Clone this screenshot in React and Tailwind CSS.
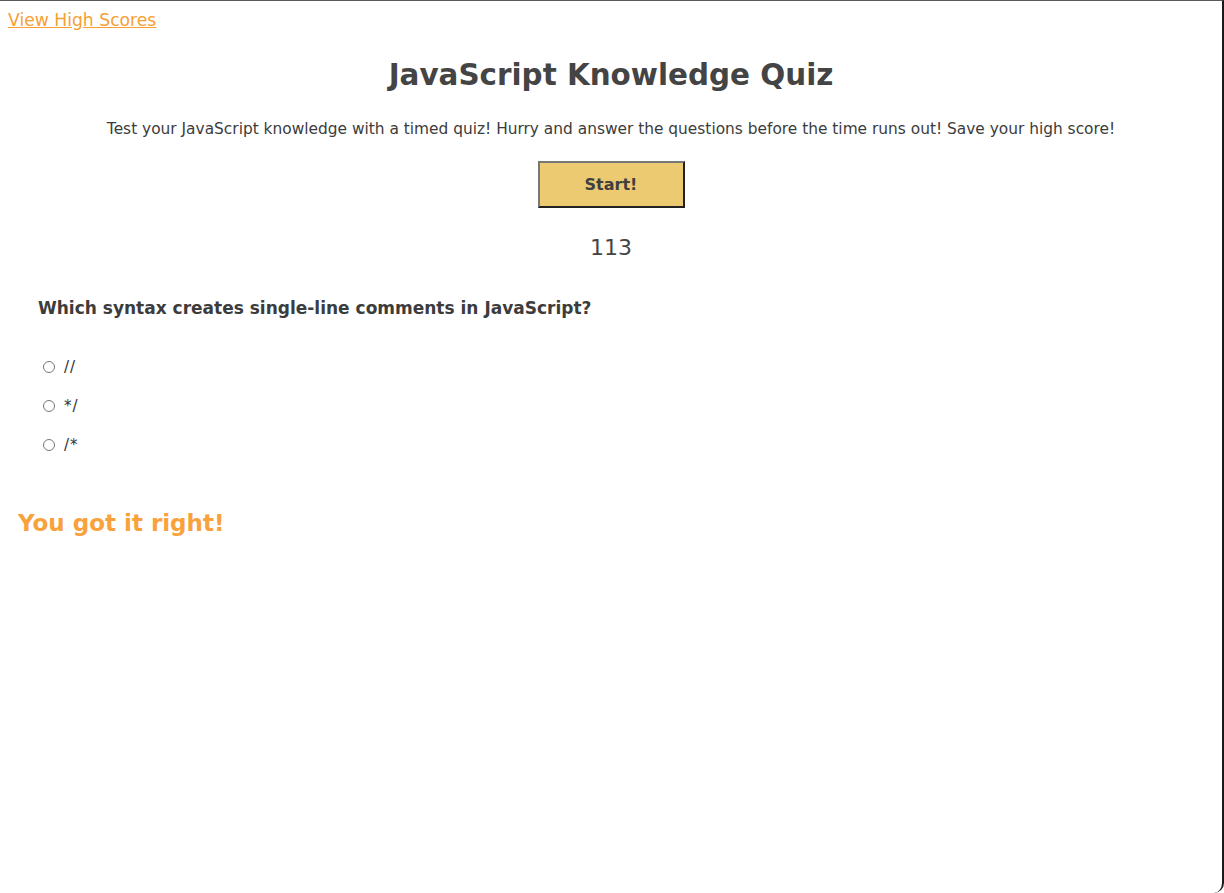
const App = () => {
  const options = ['//', '*/', '/*'];

  return (
    <div
      className="h-[893px] w-full bg-white border-t border-t-[#5a5a5a] border-r-2 border-r-[#1a1a1a] rounded-b-[10px] text-[#444444] overflow-hidden"
      style={{ fontFamily: '"DejaVu Sans", Verdana, sans-serif' }}
    >
      <div className="px-2 pt-[8px]">
        <a href="#" className="text-[17.2px] leading-[20px] text-[#f7a033] underline">
          View High Scores
        </a>
      </div>

      {/* Header */}
      <div className="flex flex-col items-center">
        <h1 className="mt-[24px] text-[29.4px] leading-[36px] font-bold text-[#444444]">
          JavaScript Knowledge Quiz
        </h1>
        <p className="mt-[27px] text-[15.4px] leading-[18px] text-[#3c3c3c]">
          Test your JavaScript knowledge with a timed quiz! Hurry and answer the questions before the time runs out! Save your high score!
        </p>
        <button className="mt-[23px] w-[147px] h-[47px] bg-[#ecca72] border-2 border-t-[#777777] border-l-[#777777] border-r-[#222222] border-b-[#222222] text-[16px] font-bold text-[#3f3f3f]">
          Start!
        </button>
        <div className="mt-[26px] text-[22px] leading-[28px] text-[#444444]">113</div>
      </div>

      {/* Question */}
      <div className="px-[38px] mt-[36px]">
        <h3 className="text-[17px] leading-[20px] font-bold text-[#3c3c3c]">
          Which syntax creates single-line comments in JavaScript?
        </h3>
        <div className="mt-[41px] flex flex-col gap-[23px] pl-[5px]">
          {options.map((opt, i) => (
            <label key={i} className="flex items-center gap-[9px] text-[15px] leading-[16px] text-[#333333]">
              <input type="radio" name="answer" className="w-[12px] h-[12px] m-0 accent-gray-500" />
              <span className="tracking-[1px]">{opt}</span>
            </label>
          ))}
        </div>
      </div>

      <div className="px-[18px] mt-[55px]">
        <h2 className="text-[23px] leading-[30px] font-bold text-[#f9a23b]">You got it right!</h2>
      </div>
    </div>
  );
};

export default App;
